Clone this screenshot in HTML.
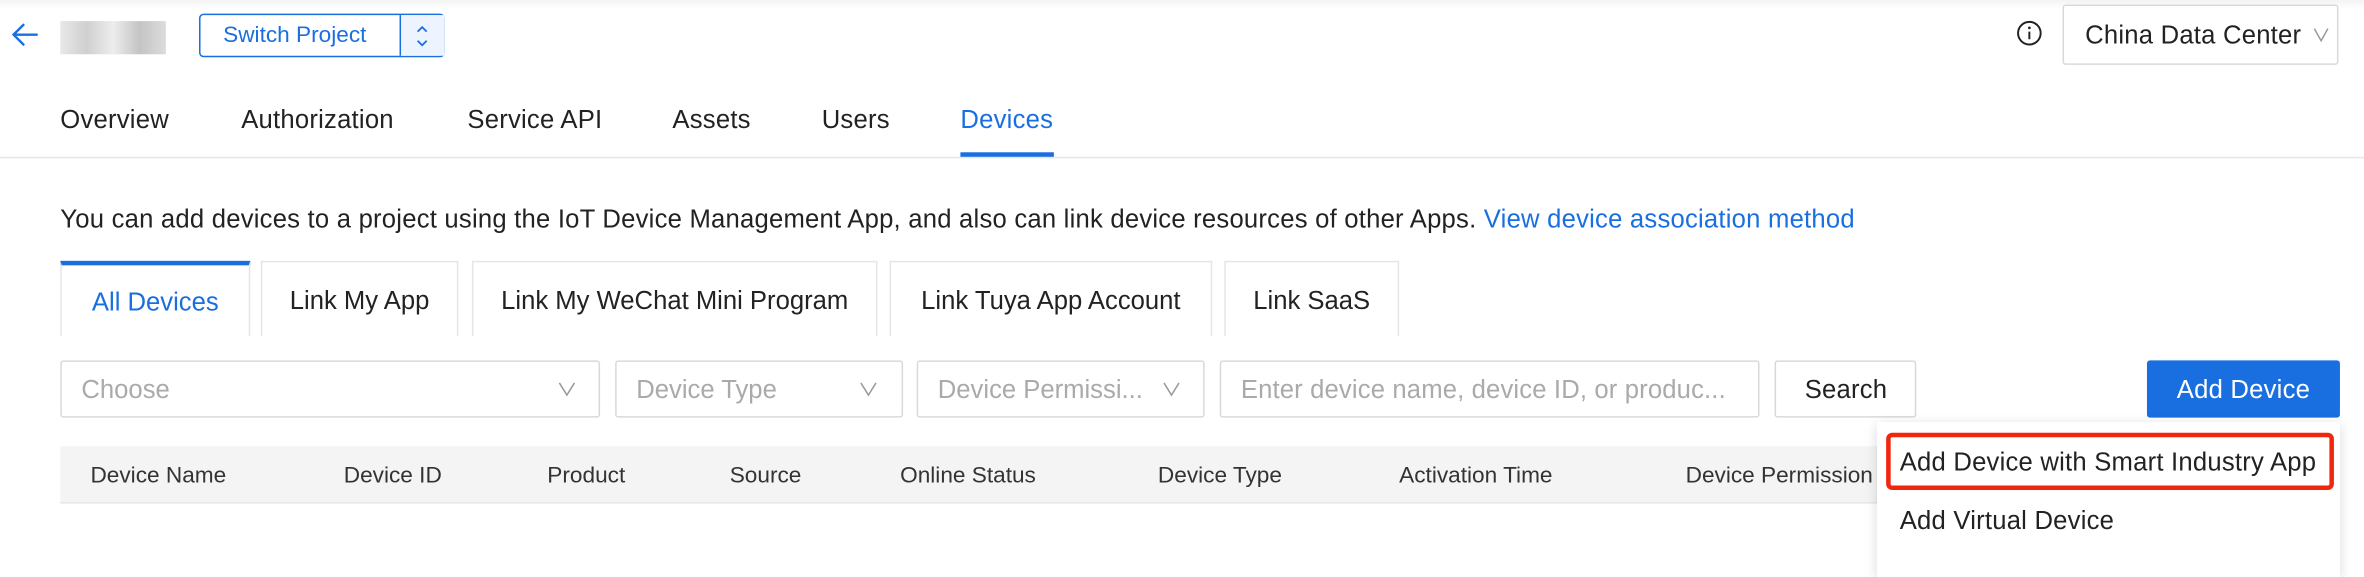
<!DOCTYPE html>
<html><head><meta charset="utf-8"><style>
html,body{margin:0;padding:0;background:#fff;overflow:hidden}
body{width:2364px;height:577px}
#s{position:absolute;left:0;top:0;width:1568px;height:383px;transform:scale(1.5077);transform-origin:0 0;font-family:"Liberation Sans",Arial,sans-serif;color:#222}
.a{position:absolute;white-space:nowrap}
.f{font-size:17px;letter-spacing:0.15px}
.blue{color:#1a6fe0}
.box{position:absolute;border:1px solid #d9d9d9;box-sizing:border-box;border-radius:2px;background:#fff}
.ph{color:#aaa;font-size:17px}
.tab{position:absolute;top:173px;height:50px;border:1px solid #e6e6e6;border-bottom:none;box-sizing:border-box;background:#fff;font-size:17px;line-height:52px;text-align:center;color:#222}
.th{position:absolute;top:307px;font-size:15px;color:#333}
</style></head><body><div id="s">
<div style="position:absolute;left:0;top:0;width:1568px;height:6px;background:linear-gradient(#f3f3f3,#fff)"></div>
<svg class="a" style="left:7px;top:13px" width="20" height="20" viewBox="0 0 20 20"><path d="M18 10H3M9 3L2 10l7 7" fill="none" stroke="#1a6fe0" stroke-width="1.6"/></svg>
<div class="a" style="left:40px;top:14px;width:70px;height:22px;background:linear-gradient(90deg,#ddd,#bbb,#e5e5e5,#aaa,#ccc);opacity:.7"></div>
<div class="box" style="left:132px;top:9px;width:163px;height:29px;border-color:#1a6fe0;border-radius:3px"></div>
<div class="a blue" style="left:148px;top:15px;font-size:15px">Switch Project</div>
<div class="a" style="left:265px;top:10px;width:29px;height:27px;background:#eef4ff;border-left:1px solid #1a6fe0"></div>
<svg class="a" style="left:275px;top:15px" width="10" height="18" viewBox="0 0 10 18"><path d="M2 6l3-3 3 3M2 12l3 3 3-3" fill="none" stroke="#1a6fe0" stroke-width="1.2"/></svg>
<svg class="a" style="left:1337px;top:13px" width="18" height="18" viewBox="0 0 18 18"><circle cx="9" cy="9" r="7.5" fill="none" stroke="#222" stroke-width="1.3"/><circle cx="9" cy="5.5" r="0.9" fill="#222"/><path d="M9 8v5" stroke="#222" stroke-width="1.3"/></svg>
<div class="box" style="left:1368px;top:3px;width:183px;height:40px"></div>
<div class="a f" style="left:1383px;top:14px">China Data Center</div>
<svg class="a" style="left:1534px;top:18px" width="11" height="10" viewBox="0 0 11 10"><path d="M1 1l4.5 8 4.5-8" fill="none" stroke="#999" stroke-width="1"/></svg>
<div class="a f" style="left:40px;top:70px">Overview</div>
<div class="a f" style="left:160px;top:70px">Authorization</div>
<div class="a f" style="left:310px;top:70px">Service API</div>
<div class="a f" style="left:446px;top:70px">Assets</div>
<div class="a f" style="left:545px;top:70px">Users</div>
<div class="a f blue" style="left:637px;top:70px">Devices</div>
<div class="a" style="left:0;top:104px;width:1568px;height:1px;background:#e6e6e6"></div>
<div class="a" style="left:637px;top:101px;width:62px;height:3px;background:#1a6fe0"></div>
<div class="a f" style="left:40px;top:136px">You can add devices to a project using the IoT Device Management App, and also can link device resources of other Apps. <span class="blue">View device association method</span></div>
<div class="tab" style="left:40px;width:126px;border-top:3px solid #1a6fe0;line-height:49px;color:#1a6fe0">All Devices</div>
<div class="tab" style="left:173px;width:131px">Link My App</div>
<div class="tab" style="left:313px;width:269px">Link My WeChat Mini Program</div>
<div class="tab" style="left:590px;width:214px">Link Tuya App Account</div>
<div class="tab" style="left:812px;width:116px">Link SaaS</div>
<div class="box" style="left:40px;top:239px;width:358px;height:38px"></div>
<div class="a ph" style="left:54px;top:249px">Choose</div>
<svg class="a" style="left:370px;top:253px" width="12" height="10" viewBox="0 0 12 10"><path d="M1 1l5 8 5-8" fill="none" stroke="#999" stroke-width="1"/></svg>
<div class="box" style="left:408px;top:239px;width:191px;height:38px"></div>
<div class="a ph" style="left:422px;top:249px">Device Type</div>
<svg class="a" style="left:570px;top:253px" width="12" height="10" viewBox="0 0 12 10"><path d="M1 1l5 8 5-8" fill="none" stroke="#999" stroke-width="1"/></svg>
<div class="box" style="left:608px;top:239px;width:191px;height:38px"></div>
<div class="a ph" style="left:622px;top:249px">Device Permissi...</div>
<svg class="a" style="left:771px;top:253px" width="12" height="10" viewBox="0 0 12 10"><path d="M1 1l5 8 5-8" fill="none" stroke="#999" stroke-width="1"/></svg>
<div class="box" style="left:809px;top:239px;width:358px;height:38px"></div>
<div class="a ph" style="left:823px;top:249px;letter-spacing:0.1px">Enter device name, device ID, or produc...</div>
<div class="box" style="left:1177px;top:239px;width:94px;height:38px"></div>
<div class="a f" style="left:1197px;top:249px">Search</div>
<div class="a f" style="left:1424px;top:239px;width:128px;height:38px;background:#1a6fe0;border-radius:2px;color:#fff;line-height:40px;text-align:center">Add Device</div>
<div class="a" style="left:40px;top:296px;width:1210px;height:37px;background:#f4f4f4;border-bottom:1px solid #e6e6e6"></div>
<div class="th" style="left:60px">Device Name</div>
<div class="th" style="left:228px">Device ID</div>
<div class="th" style="left:363px">Product</div>
<div class="th" style="left:484px">Source</div>
<div class="th" style="left:597px">Online Status</div>
<div class="th" style="left:768px">Device Type</div>
<div class="th" style="left:928px">Activation Time</div>
<div class="th" style="left:1118px">Device Permission</div>
<div class="a" style="left:1245px;top:280px;width:307px;height:103px;background:#fff;box-shadow:0 2px 8px rgba(0,0,0,.15)"></div>
<div class="a" style="left:1251px;top:287px;width:297px;height:38px;border:3px solid #f0260e;border-radius:4px;box-sizing:border-box"></div>
<div class="a" style="left:1260px;top:297px;font-size:17px;letter-spacing:0.15px">Add Device with Smart Industry App</div>
<div class="a" style="left:1260px;top:336px;font-size:17px;letter-spacing:0.15px">Add Virtual Device</div>
</div></body></html>
